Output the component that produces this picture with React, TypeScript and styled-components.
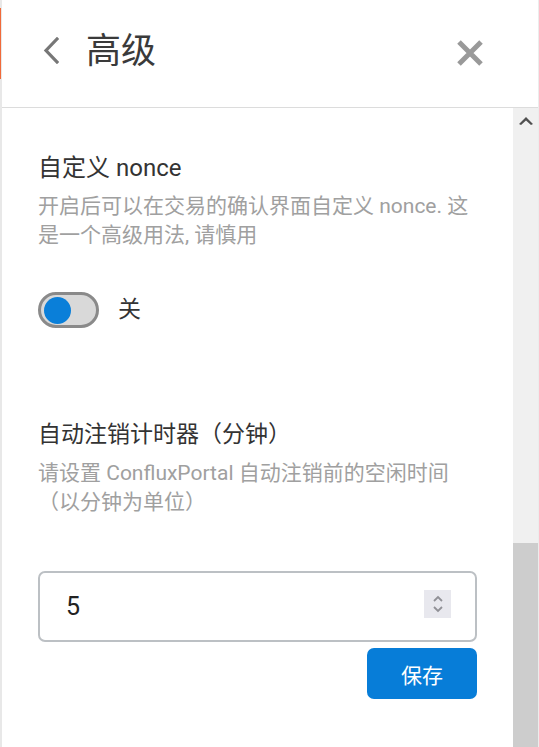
import { useState } from 'react';
import styled, { createGlobalStyle } from 'styled-components';

const GlobalStyle = createGlobalStyle`
	html, body {
		margin: 0;
		padding: 0;
		background: #ffffff;
	}
	body {
		font-family: Roboto, 'Noto Sans CJK SC', sans-serif;
		color: #333333;
	}
	* {
		box-sizing: border-box;
	}
`;

const BackIcon = () => (
	<svg width="16" height="27" viewBox="0 0 16 27" fill="none">
		<polyline
			points="14,2 3,13.5 14,25"
			stroke="#777777"
			strokeWidth="3.2"
			strokeLinecap="square"
		/>
	</svg>
);

const CloseIcon = () => (
	<svg width="28" height="28" viewBox="0 0 28 28" fill="none">
		<path d="M3 3 L25 25 M25 3 L3 25" stroke="#999999" strokeWidth="5" />
	</svg>
);

const SpinIcon = () => (
	<svg width="12" height="20" viewBox="0 0 12 20" fill="none">
		<polyline points="2,7 6,3 10,7" stroke="#909096" strokeWidth="1.8" />
		<polyline points="2,13 6,17 10,13" stroke="#909096" strokeWidth="1.8" />
	</svg>
);

const ScrollUpIcon = () => (
	<svg width="14" height="8" viewBox="0 0 14 8">
		<path d="M0 7 L7 0 L14 7 L12 8 L7 3.5 L2 8 Z" fill="#505050" />
	</svg>
);

export default function App() {
	const [nonceOn, setNonceOn] = useState(false);
	const [minutes, setMinutes] = useState('5');

	return (
		<>
			<GlobalStyle />
			<Page>
				<LeftEdge>
					<EdgeMark />
				</LeftEdge>

				<Main>
					<Header>
						<IconButton>
							<BackIcon />
						</IconButton>
						<Title>高级</Title>
						<CloseButton>
							<CloseIcon />
						</CloseButton>
					</Header>

					<Body>
						<Content>
							<Section>
								<SectionTitle $size={24}>自定义 nonce</SectionTitle>
								<Description>
									开启后可以在交易的确认界面自定义 nonce. 这<br />
									是一个高级用法, 请慎用
								</Description>
								<ToggleRow>
									<Toggle
										$on={nonceOn}
										onClick={() => setNonceOn(!nonceOn)}
									>
										<Knob $on={nonceOn} />
									</Toggle>
									<ToggleLabel>{nonceOn ? '开' : '关'}</ToggleLabel>
								</ToggleRow>
							</Section>

							<Section $top={92}>
								<SectionTitle $size={23}>自动注销计时器（分钟）</SectionTitle>
								<Description>
									请设置 ConfluxPortal 自动注销前的空闲时间
									<br />
									（以分钟为单位）
								</Description>
								<NumberBox>
									<NumberInput
										type="text"
										value={minutes}
										onChange={(e) => setMinutes(e.target.value)}
									/>
									<Spinner>
										<SpinIcon />
									</Spinner>
								</NumberBox>
								<Actions>
									<SaveButton>保存</SaveButton>
								</Actions>
							</Section>
						</Content>

						<ScrollBar>
							<ScrollArrow>
								<ScrollUpIcon />
							</ScrollArrow>
							<ScrollTrack>
								<ScrollThumb />
							</ScrollTrack>
						</ScrollBar>
					</Body>
				</Main>

				<RightEdge />
			</Page>
		</>
	);
}

const Page = styled.div`
	display: flex;
	width: 539px;
	height: 747px;
	overflow: hidden;
`;

const LeftEdge = styled.div`
	width: 2px;
	flex-shrink: 0;
	background: #e8e8e8;
	padding-top: 8px;
`;

const EdgeMark = styled.div`
	width: 1px;
	height: 71px;
	background: #f06a3a;
`;

const RightEdge = styled.div`
	width: 1px;
	flex-shrink: 0;
	background: #ececec;
`;

const Main = styled.div`
	flex: 1;
	display: flex;
	flex-direction: column;
	min-width: 0;
`;

const Header = styled.div`
	display: flex;
	align-items: center;
	height: 108px;
	padding: 0 53px 4px 41px;
	border-bottom: 1px solid #dcdcdc;
	flex-shrink: 0;
`;

const IconButton = styled.div`
	display: flex;
	align-items: center;
	cursor: pointer;
	margin-top: -2px;
`;

const Title = styled.h1`
	margin: 0 0 0 27px;
	font-size: 35px;
	font-weight: 400;
	color: #3a3a3a;
	line-height: 1.2;
	flex: 1;
`;

const CloseButton = styled.div`
	display: flex;
	align-items: center;
	cursor: pointer;
	margin: 3px 1px 0 0;
`;

const Body = styled.div`
	flex: 1;
	display: flex;
	min-height: 0;
`;

const Content = styled.div`
	flex: 1;
	padding: 45px 36px 0 36px;
`;

const Section = styled.div<{ $top?: number }>`
	display: flex;
	flex-direction: column;
	margin-top: ${({ $top }) => $top ?? 0}px;
`;

const SectionTitle = styled.h2<{ $size: number }>`
	margin: 0;
	font-size: ${({ $size }) => $size}px;
	font-weight: 400;
	line-height: 30px;
	color: #333333;
`;

const Description = styled.p`
	margin: 9px 0 0;
	font-size: 21px;
	line-height: 29px;
	color: #a0a0a0;
	white-space: nowrap;
`;

const ToggleRow = styled.div`
	display: flex;
	align-items: center;
	gap: 19px;
	margin-top: 42px;
`;

const Toggle = styled.div<{ $on: boolean }>`
	width: 61px;
	height: 36px;
	border-radius: 18px;
	border: 3px solid #8a8a8a;
	background: ${({ $on }) => ($on ? '#0a7fd9' : '#d9d9d9')};
	display: flex;
	align-items: center;
	padding: 0 3px;
	cursor: pointer;
`;

const Knob = styled.div<{ $on: boolean }>`
	width: 27px;
	height: 27px;
	border-radius: 50%;
	background: ${({ $on }) => ($on ? '#ffffff' : '#0a7fd9')};
	margin-left: ${({ $on }) => ($on ? '22px' : '0')};
`;

const ToggleLabel = styled.span`
	font-size: 23px;
	color: #333333;
	line-height: 30px;
`;

const NumberBox = styled.div`
	display: flex;
	align-items: center;
	height: 71px;
	margin-top: 54px;
	border: 2px solid #bcc0c4;
	border-radius: 7px;
	padding: 0 24px 0 26px;
`;

const NumberInput = styled.input`
	flex: 1;
	min-width: 0;
	border: none;
	outline: none;
	background: transparent;
	font-family: Roboto, 'Noto Sans CJK SC', sans-serif;
	font-size: 25px;
	color: #222222;
	padding: 0;
`;

const Spinner = styled.div`
	width: 27px;
	height: 28px;
	background: #e8e8ee;
	display: flex;
	align-items: center;
	justify-content: center;
	margin-top: -5px;
`;

const Actions = styled.div`
	display: flex;
	justify-content: flex-end;
	margin-top: 6px;
`;

const SaveButton = styled.button`
	width: 110px;
	height: 51px;
	border: none;
	border-radius: 7px;
	background: #077dd8;
	color: #ffffff;
	font-family: Roboto, 'Noto Sans CJK SC', sans-serif;
	font-size: 21px;
	cursor: pointer;
`;

const ScrollBar = styled.div`
	width: 25px;
	flex-shrink: 0;
	display: flex;
	flex-direction: column;
	background: #f0f0f0;
`;

const ScrollArrow = styled.div`
	height: 24px;
	display: flex;
	align-items: center;
	justify-content: center;
	padding-top: 2px;
`;

const ScrollTrack = styled.div`
	flex: 1;
	display: flex;
	flex-direction: column;
	justify-content: flex-end;
`;

const ScrollThumb = styled.div`
	height: 204px;
	background: #cdcdcd;
`;
